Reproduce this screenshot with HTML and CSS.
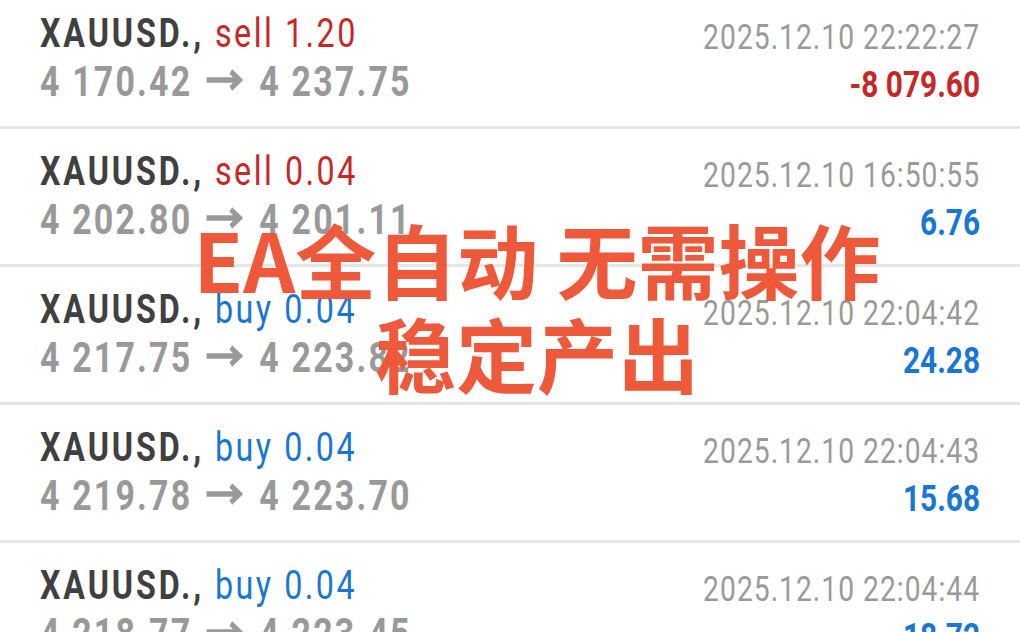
FILE: index.html
```html
<!DOCTYPE html>
<html lang="zh-CN">

<head>
  <meta charset="UTF-8">
  <meta name="viewport" content="width=device-width, initial-scale=1.0">
  <title>History</title>
  <link rel="stylesheet" href="styles.css">
</head>

<body>

  <div class="screen">
    <div class="deals">
      <div class="deal">
        <div class="line">
          <span class="symbol">XAUUSD., <span class="sell">sell 1.20</span></span>
          <span class="time">2025.12.10 22:22:27</span>
        </div>
        <div class="line">
          <span class="prices">4 170.42<svg class="arrow" viewBox="0 0 46 22"><path d="M1 11H42M31 2.5L42 11L31 19.5" /></svg>4 237.75</span>
          <span class="profit loss">-8 079.60</span>
        </div>
      </div>
      <div class="deal">
        <div class="line">
          <span class="symbol">XAUUSD., <span class="sell">sell 0.04</span></span>
          <span class="time">2025.12.10 16:50:55</span>
        </div>
        <div class="line">
          <span class="prices">4 202.80<svg class="arrow" viewBox="0 0 46 22"><path d="M1 11H42M31 2.5L42 11L31 19.5" /></svg>4 201.11</span>
          <span class="profit">6.76</span>
        </div>
      </div>
      <div class="deal">
        <div class="line">
          <span class="symbol">XAUUSD., <span class="buy">buy 0.04</span></span>
          <span class="time">2025.12.10 22:04:42</span>
        </div>
        <div class="line">
          <span class="prices">4 217.75<svg class="arrow" viewBox="0 0 46 22"><path d="M1 11H42M31 2.5L42 11L31 19.5" /></svg>4 223.82</span>
          <span class="profit">24.28</span>
        </div>
      </div>
      <div class="deal">
        <div class="line">
          <span class="symbol">XAUUSD., <span class="buy">buy 0.04</span></span>
          <span class="time">2025.12.10 22:04:43</span>
        </div>
        <div class="line">
          <span class="prices">4 219.78<svg class="arrow" viewBox="0 0 46 22"><path d="M1 11H42M31 2.5L42 11L31 19.5" /></svg>4 223.70</span>
          <span class="profit">15.68</span>
        </div>
      </div>
      <div class="deal">
        <div class="line">
          <span class="symbol">XAUUSD., <span class="buy">buy 0.04</span></span>
          <span class="time">2025.12.10 22:04:44</span>
        </div>
        <div class="line">
          <span class="prices">4 218.77<svg class="arrow" viewBox="0 0 46 22"><path d="M1 11H42M31 2.5L42 11L31 19.5" /></svg>4 223.45</span>
          <span class="profit">18.72</span>
        </div>
      </div>
    </div>

    <!-- caption pasted over the screenshot -->
    <div class="promo">EA全自动 无需操作<br>稳定产出</div>
  </div>

</body>

</html>
```

FILE: styles.css
```css
* {
  box-sizing: border-box;
}

body {
  background-color: #fff;
  margin: 0;
  overflow: hidden;
}

.screen {
  position: relative;
  width: 1020px;
  height: 632px;
  overflow: hidden;
}

/* the app font is a condensed Roboto, squeeze the whole list */
.deals {
  width: 1264px;
  margin-top: -9px;
  transform: scaleX(0.807);
  transform-origin: left top;
  font-family: Roboto, "Liberation Sans", sans-serif;
}

.deal {
  height: 138px;
  padding: 19px 49.5px 0;
  border-bottom: 3px solid #e6e6e6;
}

.line {
  display: flex;
  justify-content: space-between;
  align-items: flex-start;
  white-space: nowrap;
}

.symbol {
  font-size: 40px;
  line-height: 48px;
  font-weight: 700;
  letter-spacing: 3.6px;
  color: #404040;
}

.sell,
.buy {
  font-weight: 400;
  letter-spacing: 3.1px;
}

.sell {
  color: #c62828;
}

.buy {
  color: #1976d2;
}

.time {
  margin-top: 8px;
  font-size: 35px;
  line-height: 40px;
  letter-spacing: 1.25px;
  color: #9a9a9a;
}

.prices {
  font-size: 42px;
  line-height: 48px;
  font-weight: 700;
  letter-spacing: 2.7px;
  color: #999;
}

.arrow {
  width: 46px;
  height: 22px;
  margin: 0 20px 0 17px;
  vertical-align: 5px;
  fill: none;
  stroke: #999;
  stroke-width: 5.5;
}

.profit {
  margin-top: 5px;
  font-size: 37px;
  line-height: 44px;
  font-weight: 700;
  color: #1976d2;
}

.profit.loss {
  color: #c62828;
}

.promo {
  position: absolute;
  left: 137px;
  top: 211px;
  width: 800px;
  text-align: center;
  font-family: "Noto Sans CJK SC", "Noto Sans", sans-serif;
  font-size: 81px;
  line-height: 94px;
  font-weight: 700;
  color: #ef593b;
}
```
